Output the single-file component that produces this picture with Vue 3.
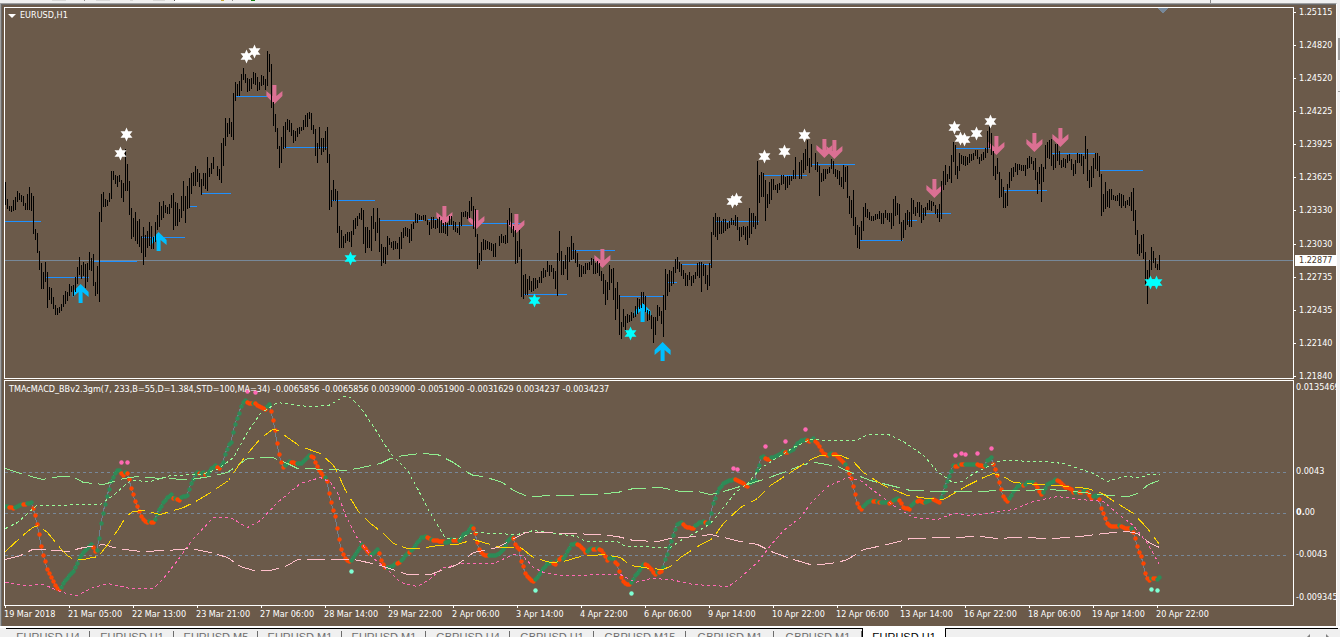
<script setup>
const parse = (s) => s.trim().split(/\s+/)
const toPoints = (s) => parse(s).map((p) => p.split(',').map(Number))

/* high-low bars, one every 2px, "_" is a missing bar */
const barText = `
182-205 199-209 206-211 206-212 200-211 197-210 191-202 193-200 195-202 196-206 203-210 194-210 187-210 193-211 196-234 229-240 233-253 251-270 263-289 272-289
262-282 272-308 287-300 288-304 297-309 305-315 308-315 307-313 304-311 295-307 291-304 292-301 284-296 286-292 285-296 277-292 267-284 257-275 265-279 262-276
264-288 263-282 252-270 258-271 254-286 282-296 266-294 212-302 194-222 192-207 199-207 200-206 193-202 171-199 171-180 175-184 176-187 175-182 180-198 183-202
149-191 164-191 181-215 208-239 218-237 212-241 221-244 219-247 236-253 227-265 235-257 231-248 222-246 226-249 237-249 222-242 215-230 202-227 206-220 201-218
205-213 207-214 204-214 195-208 193-230 202-226 203-226 209-222 196-218 181-211 196-223 186-209 178-208 173-194 172-186 166-186 169-182 173-187 179-195 173-186
173-189 157-191 168-177 163-174 157-169 _ 166-176 169-180 143-183 138-166 118-146 123-137 118-134 122-137 93-140 82-101 84-96 81-96 74-91 68-80
74-83 78-92 79-91 78-89 72-84 73-85 77-91 82-90 75-86 76-85 79-90 51-86 54-72 64-108 102-126 114-132 128-149 146-168 137-163 126-149
122-148 119-130 120-132 123-136 130-143 131-141 128-137 127-134 127-131 120-130 115-127 113-127 112-119 113-130 125-134 129-156 143-163 127-149 138-155 138-152
131-150 127-163 154-210 190-207 180-201 189-201 191-233 226-248 230-248 236-248 234-243 232-241 232-242 231-247 220-235 218-229 216-226 213-219 208-220 210-244
227-253 227-248 230-248 216-251 208-229 222-241 208-233 218-252 244-266 247-263 247-264 236-255 238-245 242-248 241-250 241-249 243-249 237-259 232-249 228-238
227-236 228-237 229-243 224-241 222-229 213-223 214-223 215-220 216-220 215-220 215-221 220-225 222-235 217-229 217-228 220-229 219-228 217-233 220-233 223-233
222-234 223-236 216-225 216-225 221-230 222-232 228-233 222-235 212-226 212-217 211-217 212-219 201-218 197-211 206-229 209-237 234-269 253-265 242-261 239-250
240-250 241-249 242-250 243-251 244-257 243-257 _ 236-246 234-243 236-243 235-244 220-243 208-225 213-233 226-237 230-264 241-263 230-257 249-297 275-299
274-295 279-295 276-290 281-292 278-291 278-289 280-288 277-283 271-283 268-278 270-277 261-272 265-276 265-272 268-279 271-289 253-296 231-261 251-275 261-275
255-269 247-280 247-262 236-260 243-259 250-263 253-267 264-277 265-277 266-274 263-274 263-270 262-270 258-265 259-274 263-274 261-273 263-276 271-281 274-294
280-305 282-300 265-290 269-283 268-300 288-320 282-309 295-335 322-339 309-327 316-332 314-323 315-322 312-321 313-318 306-317 298-314 299-309 292-308 292-304
296-312 310-321 311-320 315-329 317-343 317-335 305-321 307-316 311-324 295-337 269-310 274-296 270-292 271-286 267-284 259-273 257-269 262-272 264-276 270-279
273-286 275-286 272-280 276-286 275-283 272-279 263-276 262-278 262-292 264-276 265-284 275-290 263-286 232-268 217-235 213-237 217-240 217-234 221-234 219-233
219-231 223-229 221-228 218-225 220-225 215-226 217-230 227-241 227-237 226-235 227-240 226-245 208-238 213-234 213-227 216-229 161-225 175-203 172-197 173-197
180-221 194-208 182-204 179-200 179-190 185-190 184-193 183-190 175-185 175-184 177-190 176-188 176-185 176-181 170-179 157-179 _ 162-179 160-179 153-173
149-170 140-166 158-173 144-167 _ 153-170 162-172 166-196 173-182 169-181 169-179 169-174 167-173 159-169 161-174 169-177 170-179 171-185 177-187 165-189
167-182 166-198 196-214 200-218 190-226 217-235 225-248 227-249 221-240 207-231 203-217 209-218 212-220 216-221 216-221 214-220 214-219 211-219 213-224 213-224
210-218 213-220 213-222 213-229 199-226 196-216 203-215 204-224 222-241 220-238 213-230 210-225 212-227 198-227 200-214 207-216 202-213 202-217 205-223 208-220
207-216 203-210 200-210 201-211 202-206 205-214 209-218 204-222 181-219 171-190 165-185 174-182 166-179 155-183 142-162 145-175 166-179 153-171 155-164 156-165
156-166 157-165 154-163 154-161 153-160 150-156 150-159 157-164 154-161 152-160 148-158 131-153 121-148 133-155 151-176 166-180 158-174 172-198 179-197 187-208
193-208 184-206 172-188 168-181 167-177 163-172 164-175 164-170 165-171 165-171 165-176 158-169 156-168 157-164 161-170 158-180 172-194 167-184 164-202 167-182
145-169 142-158 140-159 139-166 155-170 144-168 144-161 151-165 160-168 158-167 159-168 155-163 154-161 159-170 164-176 160-174 153-163 154-163 154-166 156-174
136-159 149-181 170-188 166-187 158-178 153-169 153-171 156-177 174-216 194-212 182-209 191-207 189-208 189-200 195-200 196-201 195-201 193-206 194-208 195-206
201-208 200-205 197-206 192-211 188-221 210-235 230-254 244-256 235-253 234-259 252-286 270-304 260-281 247-270 251-263 258-268 264-270 255-270`
const barPath = parse(barText)
  .map((b, i) => {
    if (b === '_') return ''
    const [hi, lo] = b.split('-').map(Number)
    return `M${5 + 2 * i} ${hi}h1V${lo}h-1z`
  })
  .join('')

/* support / resistance segments: x1,x2,y */
const levels = toPoints(`5,41,221 46,89,277 94,137,261 142,185,237 190,197,206 202,231,193 236,267,96 284,327,147 332,375,200
380,423,220 428,438,219 442,475,225 480,523,223 524,567,294 572,615,250 620,663,296 668,677,282 682,711,264 716,759,221
764,807,175 812,855,164 860,903,240 908,917,220 922,951,213 956,989,148 1004,1047,190 1052,1095,153 1100,1143,170`)

const whiteStars = toPoints('120,153 126,134 246,56 254,51 732,201 736,199 764,156 784,151 804,135 954,127 960,138 964,139 976,133 990,121')
const aquaStars = toPoints('350,258 534,300 630,333 1150,282 1156,282')
const sells = toPoints('274,85 444,206 476,210 516,214 602,249 824,139 834,140 934,179 996,136 1034,133 1060,128')
const buys = toPoints('80,284 158,232 642,303 662,342')

const upperBand = '5,528 17,522 27,513 36,505 100,504 115,493 130,480 150,481 170,475 200,474 217,469 233,457 248,430 260,413 277,402 307,406 328,405 337,400 343,396 350,397 360,407 373,426 390,453 407,470 418,490 430,513 445,538 458,538 473,532 493,533 517,534 533,530 553,533 577,536 585,541 617,541 625,546 670,547 680,540 697,531 710,523 723,507 735,492 747,483 760,468 777,457 793,447 810,439 830,440 855,440 868,434 888,434 903,441 923,455 937,471 952,482 962,481 973,473 1000,460 1043,461 1063,463 1093,473 1107,481 1123,476 1140,477 1148,474 1159,474'
const upperSlow = '5,468 20,473 42,479 60,476 72,476 83,482 103,484 123,478 137,476 160,478 190,479 210,476 227,472 247,458 272,457 287,463 297,468 333,469 343,470 357,468 380,463 390,458 403,455 420,453 437,454 453,462 467,472 473,475 483,476 502,482 513,490 527,496 557,495 593,494 617,492 633,488 660,487 670,489 680,491 697,491 710,494 723,491 743,485 763,479 783,472 803,464 815,462 837,466 857,475 870,480 890,485 910,490 943,491 980,491 997,490 1020,490 1050,489 1083,492 1110,495 1128,496 1137,493 1148,484 1159,480'
const average = '5,551 20,537 32,527 38,525 47,532 60,548 67,555 73,559 83,559 92,557 98,556 108,543 117,530 125,517 132,511 143,510 160,514 170,511 183,507 197,500 210,492 228,480 238,465 248,452 260,438 272,429 278,430 287,437 300,446 320,453 333,465 337,472 345,490 358,511 370,523 383,533 393,543 407,548 420,548 437,545 457,544 473,539 483,542 500,547 520,547 533,557 550,562 563,561 580,556 603,554 620,557 630,565 650,568 662,569 670,566 680,557 697,546 712,538 723,523 740,507 757,498 770,485 790,472 810,459 820,455 840,455 852,460 863,472 883,485 907,495 927,498 943,499 955,492 967,485 983,477 993,473 1003,476 1013,482 1037,484 1057,485 1087,488 1100,492 1117,503 1133,513 1147,528 1159,544'
const lowerBand = '5,582 23,585 43,584 62,592 77,595 90,588 107,583 130,588 153,588 163,578 177,560 193,538 213,517 230,517 247,527 260,520 277,502 300,483 320,477 330,482 337,492 345,515 357,538 372,557 387,569 400,582 417,586 430,578 443,567 463,563 493,563 513,554 522,555 533,567 543,572 560,575 620,574 635,582 650,578 670,579 693,584 728,586 740,577 757,562 770,545 783,530 800,517 810,503 827,486 847,477 860,480 877,493 893,505 913,517 937,519 953,513 970,515 993,512 1013,509 1033,501 1057,496 1080,499 1103,501 1117,513 1133,525 1147,543 1159,564'
const lowerSlow = '5,559 20,555 32,549 43,549 67,551 83,547 103,544 117,548 140,551 167,550 190,548 210,552 227,557 240,566 253,570 270,570 287,565 297,559 330,559 353,559 377,564 407,574 430,574 457,564 473,552 497,547 510,540 525,532 543,532 570,533 597,534 617,536 633,540 657,541 670,538 680,537 697,536 710,534 723,537 740,541 757,544 773,552 793,559 813,565 837,562 847,559 863,549 887,544 910,538 950,537 980,536 997,538 1017,537 1053,538 1080,536 1103,533 1127,531 1137,533 1150,543 1159,547'

/* oscillator runs: g is rising, r is falling */
const macdText = `g 5,506 7,506 r 11,507 13,508 g 17,506 21,504 r 25,504 g 31,502 r 33,508 35,515 37,524 39,534 41,546 43,555 45,561 47,569 49,573 51,577 53,581 55,585 57,588 59,589
g 61,587 63,583 69,575 73,571 75,567 79,558 83,552 87,548 91,544 r 93,547 95,551 g 97,550 99,538 101,523 103,513 105,504 107,496 109,489 111,481 113,477 115,473 117,470 119,470
r 121,473 123,475 g 125,472 r 127,473 129,479 131,488 133,494 135,501 137,506 139,511 141,516 143,519 147,522 g 149,521 r 151,522 153,522 g 155,519 159,509 163,502 167,497 171,494
r 173,498 g 175,498 r 179,500 g 181,497 187,495 189,489 191,483 193,479 195,474 197,472 r 199,473 g 203,472 r 205,474 g 207,474 211,468 215,465 r 219,468 g 223,462 225,454 229,444 231,442 233,432 235,424 237,418 239,413 241,406 243,402 245,400
r 247,402 251,403 g 253,403 r 255,403 259,406 265,409 g 267,406 269,404 r 271,411 273,420 275,430 277,443 279,454 281,462 283,467 g 285,465 289,461 r 293,462 295,463 g 297,463 301,463 305,459 309,455
r 313,457 315,462 319,470 323,476 g 325,477 r 327,481 329,493 331,502 333,510 335,516 337,528 339,539 341,549 343,554 345,558 349,561 g 351,560 355,554 359,548 361,544 r 365,548 369,553 g 371,554 374,552 377,549
r 379,553 381,560 385,567 g 387,567 391,566 395,563 r 399,562 g 401,560 407,553 r 409,552 g 413,548 417,542 421,537 425,536 r 429,538 g 431,539 r 435,540 443,541 g 446,543 451,539 r 453,540 457,540 g 459,540 463,534 467,532 471,526
r 473,528 475,533 477,542 479,549 481,552 485,555 487,555 g 495,555 499,553 503,549 507,541 511,537 r 513,538 515,544 519,549 521,561 523,566 525,573 529,578 533,581 g 535,579 539,574 543,568 547,563 552,562 r 555,564 g 557,560 r 561,557 g 563,558 567,551 571,544 575,543
r 579,545 583,549 585,552 g 588,550 591,548 r 595,549 g 597,548 r 599,549 601,550 605,556 607,560 g 609,558 613,558 r 615,562 617,564 619,571 621,577 623,581 627,584 629,584 g 631,582 635,575 640,569 643,564 r 646,564 651,569 655,574 g 657,572 r 661,571
g 663,567 665,559 667,554 669,547 671,541 673,535 675,529 677,524 681,522 r 683,524 687,527 693,528 g 695,525 699,522 703,521 r 706,523 g 709,522 711,513 713,503 715,498 717,492 719,488 723,483 729,480 733,479 r 738,480 743,483 747,486 g 749,483 755,480 757,470 759,465 761,457 763,456
r 765,458 769,459 g 771,457 775,456 779,454 783,451 r 787,452 g 789,451 793,449 797,443 801,440 805,439 r 809,441 g 811,440 813,438 r 815,441 817,443 820,448 823,453 828,455 g 831,453 r 835,454 838,457 843,462 g 845,464 r 847,468 849,473 851,478 853,486 855,494 857,503 859,507 861,509
g 863,506 867,502 871,500 r 875,501 g 877,501 r 879,502 g 883,502 887,502 r 889,503 891,502 g 893,500 897,498 r 900,501 903,507 909,509 g 911,505 915,501 r 919,500 923,502 g 927,501 932,498 r 936,500 939,502 g 941,497 943,492 945,486 947,481 949,476 951,471 953,465
r 957,466 g 959,464 r 963,464 g 967,464 975,464 r 977,464 983,466 g 985,465 987,460 991,457 r 993,464 996,472 999,482 1001,489 1003,496 1007,501 g 1009,498 1013,491 1017,486 1021,484 r 1024,485 g 1027,482 1033,482 r 1035,484 1038,489 1041,494 g 1043,492 1047,484 1051,482 1055,479
r 1058,480 1061,483 1065,487 1070,488 1073,492 g 1077,492 r 1081,492 g 1085,489 r 1087,492 1091,498 g 1094,495 1097,496 r 1099,499 1101,508 1103,513 1105,518 1107,523 1111,526 1117,526 g 1119,525 r 1122,526 1126,528 1129,528 g 1131,528
r 1133,532 1135,538 1137,546 1139,552 1141,556 1143,563 1145,573 1147,578 1149,580 g 1151,578 r 1155,578 g 1157,579 1159,577`
const knots = []
let tone = 'g'
for (const t of parse(macdText)) {
  if (t === 'g' || t === 'r') tone = t
  else {
    const [x, y] = t.split(',').map(Number)
    knots.push({ x, y, tone })
  }
}
const macdLine = knots.map((k) => `${k.x},${k.y}`).join(' ')
const dots = []
for (let x = 5, k = 0; x <= 1159; x += 2) {
  while (k < knots.length - 1 && knots[k].x < x) k++
  const b = knots[k]
  const a = knots[Math.max(0, k - 1)]
  const f = b.x === a.x ? 1 : (x - a.x) / (b.x - a.x)
  dots.push({ x, y: Math.round(a.y + (b.y - a.y) * f), tone: b.tone })
}

const hotDots = toPoints('121,462 127,462 247,391 255,392 733,468 737,469 765,446 785,441 805,429 955,455 961,453 965,454 977,453 991,448')
const mintDots = toPoints('351,571 535,590 631,593 1151,589 1157,590')

const prices = ['1.25115', '1.24820', '1.24520', '1.24225', '1.23925', '1.23625', '1.23330', '1.23030', '1.22735', '1.22435', '1.22140', '1.21840']
const oscValues = ['0.0135469', '0.0043', '0.00', '-0.0043', '-0.009345']
const times = ['19 Mar 2018', '21 Mar 05:00', '22 Mar 13:00', '23 Mar 21:00', '27 Mar 06:00', '28 Mar 14:00', '29 Mar 22:00', '2 Apr 06:00', '3 Apr 14:00', '4 Apr 22:00', '6 Apr 06:00', '9 Apr 14:00', '10 Apr 22:00', '12 Apr 06:00', '13 Apr 14:00', '16 Apr 22:00', '18 Apr 06:00', '19 Apr 14:00', '20 Apr 22:00']
const tabs = [
  { name: 'EURUSD,H4' }, { name: 'EURUSD,H1' }, { name: 'EURUSD,M5' }, { name: 'EURUSD,M1' }, { name: 'EURUSD,M1' },
  { name: 'GBPUSD,H4' }, { name: 'GBPUSD,H1' }, { name: 'GBPUSD,M15', size: 'wide' }, { name: 'GBPUSD,M1', size: 'mid' },
  { name: 'GBPUSD,M1', size: 'mid' }, { name: 'EURUSD,H1', size: 'active' },
]
</script>

<template>
  <div class="terminal">
    <svg class="toolbar" width="100%" height="3" aria-hidden="true">
      <path d="M52 0h14v1h-14zM96 0h14v1h-14zM130 0h3v1h-3zM153 0h12v1h-12z" fill="#d8d8d8" />
      <path d="M84 0h1v1h-1zM232 0h1v1h-1zM1210 0h1v3h-1z" fill="#8a8a8a" />
      <path d="M174 0h26v2h-26z" fill="#fff" />
      <path d="M174 0h1v1h-1z" fill="#555" />
      <path d="M221 0h3v1h-3z" fill="#c8a832" />
      <path d="M251 0h4v1h-4z" fill="#108010" />
    </svg>

    <div class="middle">
      <main class="window">
        <div class="row">
          <section class="panel price" aria-label="EURUSD,H1 price chart">
            <svg width="100%" height="370" shape-rendering="crispEdges">
              <defs>
                <path id="star" d="M0-7 1.6-3.2H6L3.4 0 6 3.2H1.6L0 7-1.6 3.2H-6L-3.4 0-6-3.2H-1.6Z" />
                <path id="arrow" d="M-2 0H2V11L8 6V11L0 19-8 11V6L-2 11Z" />
              </defs>
              <g transform="translate(-5 -8)">
                <path d="M1157 8h11l-5 5h-1z" fill="#778899" />
                <rect v-for="(l, i) in levels" :key="i" :x="l[0]" :y="l[2]" :width="l[1] - l[0]" height="1" fill="#1e90ff" />
                <rect x="5" y="260" width="100%" height="1" fill="#778899" />
                <g fill="#db7093" shape-rendering="auto" transform="translate(.4 0)">
                  <use v-for="(a, i) in sells" :key="i" href="#arrow" :x="a[0]" :y="a[1]" />
                </g>
                <g fill="#00bfff" shape-rendering="auto" transform="translate(.6 0)">
                  <use v-for="(a, i) in buys" :key="i" href="#arrow" :transform="`translate(${a[0]} ${a[1] + 19}) scale(1 -1)`" />
                </g>
                <path :d="barPath" fill="#000" />
                <g shape-rendering="auto" transform="translate(.5 .5)">
                  <use v-for="(s, i) in whiteStars" :key="'w' + i" href="#star" :x="s[0]" :y="s[1]" fill="#fff" />
                  <use v-for="(s, i) in aquaStars" :key="'a' + i" href="#star" :x="s[0]" :y="s[1]" fill="#0ff" />
                </g>
              </g>
            </svg>
            <h1 class="title"><svg width="8" height="4" aria-hidden="true"><path d="M0 0h8l-4 4z" fill="#fff" /></svg>EURUSD,H1</h1>
          </section>
          <div class="scale price-scale">
            <span v-for="p in prices" :key="p">{{ p }}</span>
            <strong class="bid">1.22877</strong>
          </div>
        </div>

        <div class="row second">
          <section class="panel" aria-label="Oscillator">
            <svg width="100%" height="224">
              <g transform="translate(-5 -381)" fill="none" shape-rendering="crispEdges">
                <g stroke="#778899" stroke-dasharray="3 3">
                  <line x1="5" x2="100%" y1="472.5" y2="472.5" />
                  <line x1="5" x2="100%" y1="513.5" y2="513.5" />
                  <line x1="5" x2="100%" y1="555.5" y2="555.5" />
                </g>
                <polyline :points="macdLine" stroke="#708090" />
                <g shape-rendering="auto">
                  <circle v-for="d in dots" :key="d.x" :cx="d.x + 0.5" :cy="d.y + 0.5" r="2.2" :fill="d.tone === 'g' ? '#2e8b57' : '#ff4500'" />
                </g>
                <g transform="translate(.5 .5)">
                  <polyline :points="upperBand" stroke="#98fb98" stroke-dasharray="3 3" />
                  <polyline :points="lowerBand" stroke="#ff69b4" stroke-dasharray="3 3" />
                  <polyline :points="upperSlow" stroke="#90ee90" stroke-dasharray="18 6" />
                  <polyline :points="lowerSlow" stroke="#ffc0cb" stroke-dasharray="18 6" />
                  <polyline :points="average" stroke="#ffd700" stroke-dasharray="18 6" />
                </g>
                <g shape-rendering="auto">
                  <circle v-for="(d, i) in hotDots" :key="'h' + i" :cx="d[0] + 0.5" :cy="d[1] + 0.5" r="2.2" fill="#ff69b4" />
                  <circle v-for="(d, i) in mintDots" :key="'m' + i" :cx="d[0] + 0.5" :cy="d[1] + 0.5" r="2.2" fill="#7fffd4" />
                </g>
              </g>
            </svg>
            <h2 class="title osc-title">TMAcMACD_BBv2.3gm(7, 233,B=55,D=1.384,STD=100,MA=34) -0.0065856 -0.0065856 0.0039000 -0.0051900 -0.0031629 0.0034237 -0.0034237</h2>
          </section>
          <div class="scale osc-scale">
            <span v-for="v in oscValues" :key="v">{{ v }}</span>
          </div>
        </div>

        <div class="times">
          <span v-for="t in times" :key="t">{{ t }}</span>
        </div>
      </main>

      <svg class="edge" width="3" height="100%" aria-hidden="true">
        <path d="M1 35h2v22h-2zM1 88h2v1h-2zM1 171h2v1h-2zM1 176h2v22h-2zM1 201h2v22h-2zM1 228h2v1h-2zM1 308h2v1h-2z" fill="#a0a0a0" />
      </svg>
    </div>

    <nav class="tabs" aria-label="Charts">
      <button v-for="(t, i) in tabs" :key="i" type="button" :class="['tab', t.size]">{{ t.name }}</button>
      <div class="rest">
        <button type="button" aria-label="Scroll left"><svg width="4" height="8"><path d="M4 0v8L0 4z" fill="#808080" /></svg></button>
        <button type="button" aria-label="Scroll right"><svg width="4" height="8"><path d="M0 0v8l4-4z" fill="#808080" /></svg></button>
      </div>
    </nav>
  </div>
</template>

<style>
html,
body {
  background: #f0f0f0;
  overflow: hidden;
}
</style>

<style scoped>
.terminal {
  height: 100vh;
  overflow: hidden;
  background: #f0f0f0;
  font-family: "DejaVu Sans Condensed", "Noto Sans", sans-serif;
  font-size: 9px;
  line-height: 11px;
  color: #fff;
}
svg {
  display: block;
}
.middle {
  display: flex;
}
.window {
  flex: 1;
  min-width: 0;
  background: #6b5a4a;
  border-top: 1px solid #a0a0a0;
  border-left: 1px solid #a0a0a0;
  border-right: 1px solid #fff;
  box-shadow: inset 1px 1px #696969;
  padding: 3px 0 0 3px;
}
.edge {
  flex: none;
}
.row {
  display: flex;
}
.second {
  margin-top: 1px;
}
.panel {
  position: relative;
  flex: 1;
  min-width: 0;
  border: 1px solid #fff;
  overflow: hidden;
}
.title {
  position: absolute;
  left: 3px;
  top: 2px;
  display: flex;
  align-items: center;
  gap: 4px;
  margin: 0;
  font-size: 9px;
  font-weight: 400;
  white-space: nowrap;
}
.osc-title {
  left: 4px;
  top: 3px;
}
.scale {
  flex: none;
  width: 42px;
  overflow: hidden;
}
.price-scale {
  position: relative;
  display: flex;
  flex-direction: column;
  justify-content: space-between;
  margin-bottom: -3px;
}
.scale span {
  white-space: nowrap;
}
.price-scale span {
  display: flex;
  align-items: center;
}
.price-scale span::before {
  content: "";
  width: 2px;
  height: 1px;
  margin-right: 3px;
  background: #fff;
}
.bid {
  position: absolute;
  left: 1px;
  right: 0;
  top: 248px;
  padding-left: 4px;
  background: #fff;
  color: #4a3a2c;
  font-weight: 400;
}
.osc-scale {
  display: grid;
  grid-template-rows: 84px 41px 42px 43px 12px;
  align-items: start;
  padding: 2px 0 0 2px;
  box-sizing: border-box;
}
.osc-scale span:nth-child(3)::first-letter {
  font-weight: 700;
}
.times {
  display: flex;
  height: 20px;
  overflow: hidden;
}
.times span {
  flex: none;
  width: 64px;
  padding-top: 1px;
  white-space: nowrap;
}
.times span::before {
  content: "";
  display: block;
  width: 1px;
  height: 2px;
  margin: -1px 0 1px 1px;
  background: #fff;
}
.tabs {
  display: flex;
  border-top: 2px solid #fff;
  padding: 0 2px 0 6px;
  height: 24px;
}
button {
  border: 0;
  background: none;
  padding: 0;
  font: inherit;
}
.tab {
  position: relative;
  display: flex;
  align-items: flex-start;
  justify-content: center;
  flex: none;
  width: 84px;
  border-top: 1px solid #000;
  padding-top: 2px;
  font-family: "Liberation Sans", Arial, sans-serif;
  font-size: 11px;
  line-height: 12px;
  color: #6d6d6d;
}
.tab::after {
  content: "";
  position: absolute;
  right: 0;
  top: 2px;
  width: 1px;
  height: 14px;
  background: #6d6d6d;
}
.wide {
  width: 92px;
}
.mid {
  width: 88px;
}
.active {
  border: solid #000;
  border-width: 0 1px;
  padding-top: 3px;
  background: #fff;
  color: #000;
}
.active::after {
  display: none;
}
.rest {
  flex: 1;
  display: flex;
  align-items: flex-start;
  justify-content: flex-end;
  gap: 16px;
  padding: 5px 8px 0 0;
  border-top: 1px solid #000;
}
</style>
